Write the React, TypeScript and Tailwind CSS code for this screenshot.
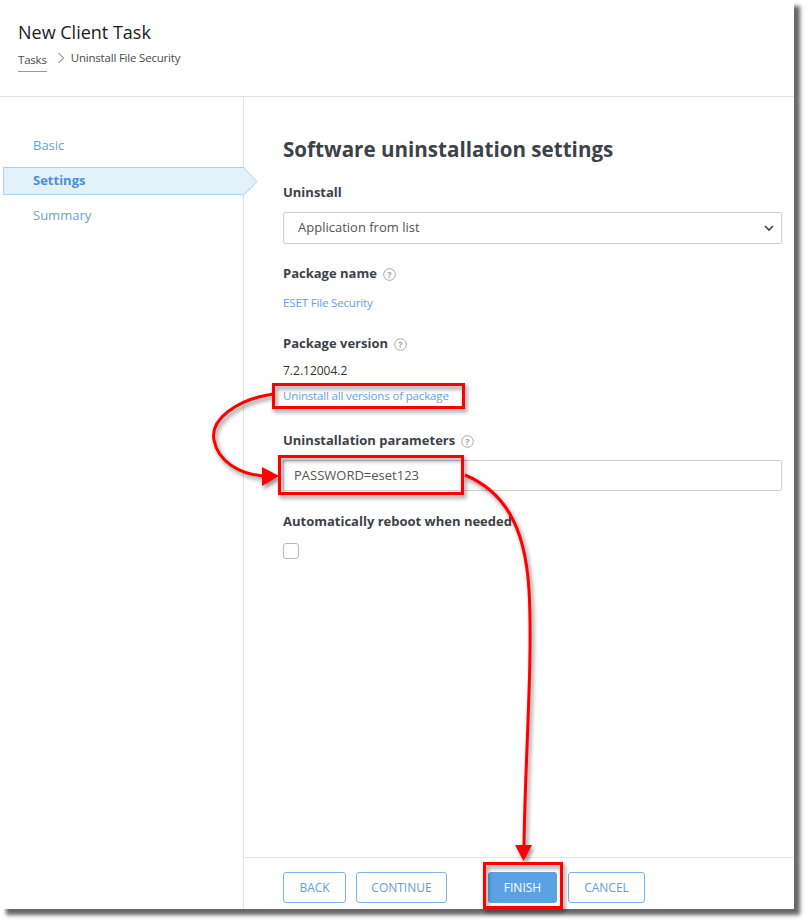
import React from "react";

const font = { fontFamily: '"Open Sans", "Liberation Sans", sans-serif' };

function HelpIcon() {
  return (
    <svg width="13" height="13" viewBox="0 0 13 13" className="ml-[6px] inline-block">
      <circle cx="6.5" cy="6.5" r="5.8" fill="none" stroke="#a8a8a8" strokeWidth="1" />
      <text x="6.5" y="9.6" textAnchor="middle" fontSize="9" fill="#a0a0a0" fontFamily="Open Sans, sans-serif">
        ?
      </text>
    </svg>
  );
}

function Label({ children, help }: { children: React.ReactNode; help?: boolean }) {
  return (
    <div className="flex items-center h-[20px] text-[13px] font-bold text-[#3d4148]">
      {children}
      {help && <HelpIcon />}
    </div>
  );
}

function Annotations() {
  return (
    <svg
      className="absolute left-0 top-0 pointer-events-none"
      width="809"
      height="924"
      style={{ filter: "drop-shadow(2px 3px 2px rgba(0,0,0,0.45))" }}
    >
      <g fill="none" stroke="#ff0000" strokeWidth="3">
        <rect x="273.5" y="384.5" width="190" height="23" />
        <rect x="279.5" y="456.5" width="183" height="37" />
        <rect x="484.5" y="863.5" width="77" height="44" />
        <path d="M 273 394 C 235 400, 210 420, 214 440 C 218 462, 240 474, 263 476" />
        <path d="M 465 475 C 500 490, 525 520, 529 590 C 533 660, 525 760, 524 846" />
      </g>
      <polygon points="262,467 279,476 262,486" fill="#ff0000" />
      <polygon points="515,845 532,845 523.5,861" fill="#ff0000" />
    </svg>
  );
}

export default function App() {
  return (
    <div className="relative w-[809px] h-[924px] bg-white overflow-hidden" style={font}>
      <div className="w-[794px] h-[909px] bg-white flex flex-col shadow-[6px_6px_4px_rgba(0,0,0,0.6)]">
        {/* header */}
        <div className="h-[97px] border-b border-[#e3e3e3] pl-[18px] pt-[19px] shrink-0">
          <div className="text-[18px] leading-[26px] text-[#1b1b1b]">New Client Task</div>
          <div className="flex items-center mt-[4px] text-[11.5px] text-[#4a4a4a] h-[18px]">
            <span className="border-b border-[#9a9a9a] leading-[20px] pb-[1px] mt-[6px] tracking-[-0.2px]">Tasks</span>
            <svg width="8" height="12" viewBox="0 0 8 12" className="ml-[10px] mr-[6px]">
              <path d="M1.5 1 L6.5 6 L1.5 11" fill="none" stroke="#666" strokeWidth="1" />
            </svg>
            <span className="tracking-[-0.2px]">Uninstall File Security</span>
          </div>
        </div>

        {/* body */}
        <div className="flex flex-1">
          {/* sidebar */}
          <div className="w-[244px] border-r border-[#e3e3e3] pt-[35px] shrink-0">
            <div className="flex flex-col gap-[7px]">
              <div className="h-[28px] flex items-center pl-[33px] text-[13px] text-[#6a9fdc]">Basic</div>
              <div className="relative h-[28px] ml-[3px] mr-[-1px] flex items-center pl-[29px] text-[13px] font-bold text-[#4a8fd8] bg-[#e3f1fb] border border-[#a9d2f0] border-r-0">
                Settings
                <svg width="16" height="30" viewBox="0 0 16 30" className="absolute right-[-15px] top-[-1px]">
                  <path d="M0 0 L14 14.5 L0 29" fill="#e3f1fb" stroke="#a9d2f0" strokeWidth="1" />
                </svg>
              </div>
              <div className="h-[28px] flex items-center pl-[33px] text-[13px] text-[#6a9fdc]">Summary</div>
            </div>
          </div>

          {/* main */}
          <div className="flex-1 flex flex-col">
            <div className="flex-1 pl-[39px] pr-[12px] pt-[37px]">
              <h1 className="text-[20.6px] leading-[30px] font-bold text-[#3d4148]">
                Software uninstallation settings
              </h1>

              <div className="mt-[19px]">
                <Label>Uninstall</Label>
              </div>
              <div className="mt-[9px] h-[32px] border border-[#cfcfcf] rounded-[2px] flex items-center justify-between pl-[14px] pr-[6px]">
                <span className="text-[13px] text-[#555]">Application from list</span>
                <svg width="12" height="12" viewBox="0 0 12 12">
                  <path d="M2 4 L6 8 L10 4" fill="none" stroke="#444" strokeWidth="1.6" />
                </svg>
              </div>

              <div className="mt-[20px]">
                <Label help>Package name</Label>
              </div>
              <div className="mt-[10px] h-[18px] text-[11.6px] text-[#6a9fdc] flex items-center tracking-[-0.2px]">
                ESET File Security
              </div>

              <div className="mt-[22px]">
                <Label help>Package version</Label>
              </div>
              <div className="mt-[8px] h-[18px] text-[12px] text-[#333] flex items-center">7.2.12004.2</div>
              <div className="mt-[7px] h-[18px] text-[11.6px] text-[#6a9fdc] flex items-center tracking-[-0.2px]">
                Uninstall all versions of package
              </div>

              <div className="mt-[26px]">
                <Label help>Uninstallation parameters</Label>
              </div>
              <div className="mt-[9px] h-[31px] border border-[#cfcfcf] rounded-[2px] flex items-center pl-[10px]">
                <span className="text-[13px] text-[#555]">PASSWORD=eset123</span>
              </div>

              <div className="mt-[21px]">
                <Label>Automatically reboot when needed</Label>
              </div>
              <div className="mt-[11px] w-[16px] h-[16px] border border-[#b9b9b9] rounded-[3px]" />
            </div>

            {/* footer */}
            <div className="h-[52px] border-t border-[#e3e3e3] pl-[39px] pt-[14px] flex items-start shrink-0">
              <button className="w-[63px] h-[31px] border border-[#7db3e8] rounded-[3px] text-[12px] text-[#5e9ede]">
                BACK
              </button>
              <button className="ml-[10px] w-[91px] h-[31px] border border-[#7db3e8] rounded-[3px] text-[12px] text-[#5e9ede]">
                CONTINUE
              </button>
              <button className="ml-[41px] w-[69px] h-[31px] rounded-[3px] bg-[#5ba2e4] text-[12px] text-white">
                FINISH
              </button>
              <button className="ml-[11px] w-[77px] h-[31px] border border-[#7db3e8] rounded-[3px] text-[12px] text-[#5e9ede]">
                CANCEL
              </button>
            </div>
          </div>
        </div>
      </div>
      <Annotations />
    </div>
  );
}
